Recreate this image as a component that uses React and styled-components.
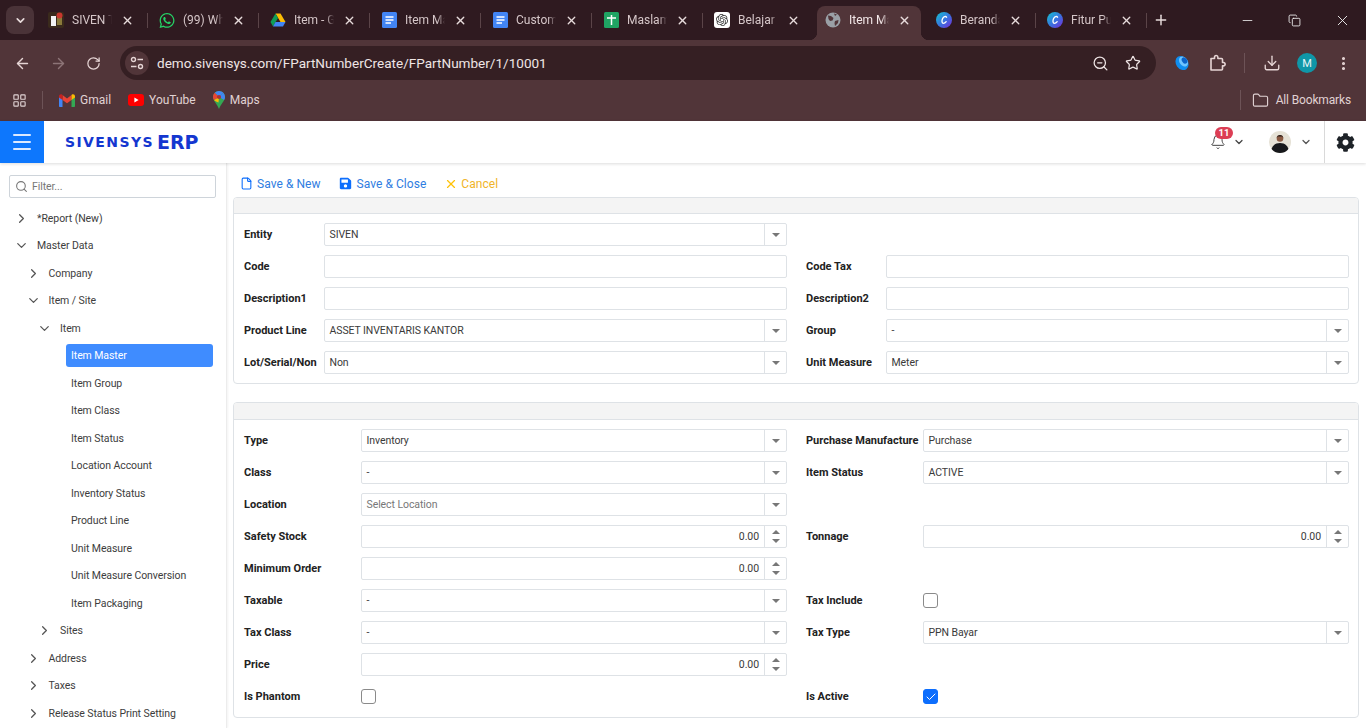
import React from "react";
import styled, { createGlobalStyle } from "styled-components";
import { ArrowLeft, ArrowRight, RotateCw, X, Plus, Minus, ZoomOut, Star, Download, EllipsisVertical, Folder, ChevronDown, ChevronRight, Bell, File, Search, Copy, LayoutGrid, Check, Menu } from "lucide-react";
import { FaWhatsapp, FaSave, FaCog } from "react-icons/fa";
import { SiOpenai } from "react-icons/si";

const Global = createGlobalStyle`
  html, body { margin: 0; padding: 0; background: #fff; }
  #root { width: 1366px; height: 728px; overflow: hidden; }
  * { box-sizing: border-box; }
`;

const Page = styled.div`
  width: 1366px; height: 728px; display: flex; flex-direction: column; overflow: hidden;
  font-family: Roboto, "Noto Sans", sans-serif; font-size: 10.5px; letter-spacing: -.08px; color: #333;
`;

/* ---------- browser chrome ---------- */
const TabStrip = styled.div`
  height: 40px; background: #2f1a20; display: flex; align-items: flex-start; flex: none; padding: 6px 0 0 6px; position: relative; letter-spacing: 0;
`;
const TabSearch = styled.div`
  width: 28px; height: 28px; margin-right: 6px; border-radius: 8px; background: #4a3338; color: #e8dcdc;
  display: flex; align-items: center; justify-content: center;
`;
const Tab = styled.div`
  width: 111px; height: 34px; flex: none; display: flex; align-items: center; padding: 0 0 6px 8px; gap: 8px; position: relative;
  color: #d5c6c8; font-family: Roboto, sans-serif; font-size: 12px;
  &::after {
    content: ""; position: absolute; right: 3px; top: 7px; height: 15px; width: 1px;
    background: ${p => (p.$sep ? "#5b4448" : "transparent")};
  }
`;
const ActiveTab = styled(Tab)`
  width: 104px; margin-right: 7px; background: #513539; border-radius: 8px 8px 0 0; color: #f3e8e8;
  &::before, &::after {
    content: ""; position: absolute; top: auto; bottom: 0; width: 8px; height: 8px; background: transparent;
  }
  &::before { left: -8px; background: radial-gradient(circle at 0 0, transparent 8px, #513539 8.5px); }
  &::after { right: -8px; background: radial-gradient(circle at 100% 0, transparent 8px, #513539 8.5px); }
`;
const FavBox = styled.span`
  width: 16px; height: 16px; flex: none; display: flex; align-items: center; justify-content: center;
`;
const TabTitle = styled.span`
  width: 40px; white-space: nowrap; overflow: hidden; flex: none;
  -webkit-mask-image: linear-gradient(90deg, #000 80%, transparent 100%);
  mask-image: linear-gradient(90deg, #000 80%, transparent 100%);
`;
const TabClose = styled.span`
  display: flex; margin-left: 1px; color: #e8dcdc;
`;
const NewTab = styled.div`
  color: #e8dcdc; display: flex; margin: 6px 0 0 3px;
`;
const WindowButtons = styled.div`
  margin-left: auto; display: flex; align-items: center; gap: 33px; padding: 6px 15px 0 0; color: #f2f2f2;
`;
const Toolbar = styled.div`
  height: 46px; background: #513539; flex: none; display: flex; align-items: center; padding: 0 12px 0 14px; color: #e6d5d5; letter-spacing: 0;
`;
const NavIcon = styled.span`
  display: flex; margin-right: 19px; color: ${p => (p.$dim ? "#8d7477" : "#e6d5d5")};
`;
const Omnibox = styled.div`
  width: 1036px; height: 34px; background: #351f23; border-radius: 17px; display: flex; align-items: center; padding: 0 15px 0 5px;
  color: #efe5e5; font-family: Roboto, sans-serif; font-size: 13.55px;
`;
const SiteInfo = styled.span`
  width: 24px; height: 24px; border-radius: 50%; background: #513539; display: flex; align-items: center; justify-content: center; margin-right: 8px;
`;
const OmniRight = styled.div`
  margin-left: auto; display: flex; gap: 16px; align-items: center;
`;
const ToolRight = styled.div`
  display: flex; align-items: center; gap: 18px; margin-left: 18px; flex: 1;
`;
const VSep = styled.span`
  width: 1px; height: 20px; background: #6d5357; margin: 0 ${p => p.$m ?? 0}px;
`;
const Profile = styled.span`
  width: 20px; height: 20px; margin-left: -2px; border-radius: 50%; background: #0f97a8; color: #e8f5f5; font-size: 11px;
  display: flex; align-items: center; justify-content: center;
`;
const Bookmarks = styled.div`
  height: 35px; background: #513539; flex: none; display: flex; align-items: center; padding: 0 15px 7px 12px; color: #e0d2d3;
  font-family: Roboto, sans-serif; font-size: 12px; letter-spacing: 0;
`;
const BookmarkSep = styled(VSep)`
  margin: 0 16px 0 15px; height: 18px;
`;
const Bookmark = styled.span`
  display: flex; align-items: center; gap: 5px; margin-right: 17px;
`;
const AllBookmarks = styled.span`
  margin-left: auto; display: flex; align-items: center; gap: 7px; letter-spacing: -.15px;
`;

/* ---------- app header ---------- */
const AppHeader = styled.header`
  height: 42px; flex: none; background: #fff; display: flex; align-items: center; box-shadow: 0 1px 3px rgba(0,0,0,.14); position: relative; z-index: 2; letter-spacing: 0;
`;
const Burger = styled.button`
  width: 44px; height: 42px; border: 0; padding: 0; background: #0d77fd; color: #dbe9ff; display: flex; align-items: center; justify-content: center;
`;
const Logo = styled.div`
  margin-left: 21px; color: #1437d0; font-family: "DejaVu Sans", sans-serif; font-weight: 700; display: flex; align-items: center; gap: 3px; line-height: 1;
`;
const LogoSmall = styled.span`
  font-size: 14px; letter-spacing: 1.4px;
`;
const LogoBig = styled.span`
  font-size: 19px;
`;
const HeaderRight = styled.div`
  margin-left: auto; display: flex; align-items: center; height: 100%;
`;
const BellWrap = styled.div`
  position: relative; display: flex; align-items: center; gap: 7px; margin-right: 24px; color: #444;
`;
const Badge = styled.span`
  position: absolute; left: 5px; top: -7px; min-width: 18px; height: 12px; border-radius: 7px; background: #dc3e55; color: #fff;
  font-size: 9.5px; font-weight: 700; display: flex; align-items: center; justify-content: center; line-height: 1;
`;
const UserWrap = styled.div`
  display: flex; align-items: center; gap: 9px; margin-right: 12px; color: #555;
`;
const Gear = styled.div`
  width: 42px; height: 100%; border-left: 1px solid #d9d9d9; display: flex; align-items: center; justify-content: center; color: #1e2328;
`;

/* ---------- body ---------- */
const Body = styled.div`
  flex: 1; display: flex; min-height: 0;
`;
const Sidebar = styled.aside`
  width: 227px; flex: none; border-right: 1px solid #ececec; padding: 12px 10px 0 9px; box-shadow: 1px 0 2px rgba(0,0,0,.05);
`;
const Filter = styled.div`
  height: 23px; border: 1px solid #ced4da; border-radius: 2px; display: flex; align-items: center; gap: 4px; padding: 0 5px; color: #777; margin-bottom: 6.5px;
`;
const Tree = styled.div`
  display: flex; flex-direction: column;
`;
const TreeRow = styled.div`
  height: 27.5px; display: flex; align-items: center; color: #3d3d3d; padding-left: ${p => p.$level * 11.5 + 5}px; white-space: nowrap;
`;
const Caret = styled.span`
  width: 17px; flex: none; display: flex; color: #555; margin-right: 6px;
`;
const LeafLabel = styled.span`
  height: 23px; width: 147px; margin-left: 52px; padding: 0 5px; border-radius: 3px; display: flex; align-items: center;
  background: ${p => (p.$active ? "#3f8cff" : "transparent")};
  color: ${p => (p.$active ? "#fff" : "#3d3d3d")};
`;
const Main = styled.main`
  flex: 1; padding: 8px 7px 0 6px; min-width: 0;
`;
const Actions = styled.div`
  height: 26px; display: flex; align-items: center; padding-left: 7px; padding-bottom: 1px; gap: 18px;
`;
const ActionBtn = styled.span`
  display: flex; align-items: center; gap: ${p => p.$gap}px; color: ${p => p.$color}; font-size: 12px; letter-spacing: .05px;
`;
const Card = styled.section`
  border: 1px solid #dee2e6; border-radius: 4px; margin-bottom: 18px; overflow: hidden; background: #fff;
`;
const CardHead = styled.div`
  height: ${p => p.$h}px; background: #f4f4f4; border-bottom: 1px solid #dee2e6;
`;
const FormGrid = styled.div`
  display: grid; grid-template-columns: ${p => p.$label}px 1fr 19px ${p => p.$label}px 1fr;
  grid-auto-rows: 23px; row-gap: 9px; align-items: center; padding: 9px 9px 9px 10px;
`;
const Label = styled.label`
  font-weight: 700; color: #222; font-size: 11px; letter-spacing: 0; white-space: nowrap; grid-column: ${p => p.$col};
`;
const Field = styled.div`
  grid-column: ${p => p.$col}; height: 23px; border: 1px solid #dee2e6; border-radius: 2px; display: flex; align-items: stretch; background: #fff; color: ${p => (p.$muted ? "#777" : "#3a3a3a")};
`;
const FieldText = styled.span`
  flex: 1; padding: 0 5px 0 4.5px; display: flex; align-items: center; justify-content: ${p => (p.$right ? "flex-end" : "flex-start")};
`;
const FieldSide = styled.span`
  width: 22px; border-left: 1px solid #dee2e6; display: flex; flex-direction: column; align-items: center; justify-content: center; gap: 5px;
`;
const Tri = styled.i`
  width: 0; height: 0; border-left: 4px solid transparent; border-right: 4px solid transparent;
  ${p => (p.$up ? "border-bottom: 4px solid #777;" : "border-top: 4px solid #777;")}
`;
const CheckBox = styled.span`
  grid-column: ${p => p.$col}; width: 15px; height: 15px; border-radius: 3px; display: flex; align-items: center; justify-content: center;
  border: 1px solid ${p => (p.$on ? "#0d6efd" : "#8a8a8a")}; background: ${p => (p.$on ? "#0d6efd" : "#fff")}; color: #fff;
`;

/* ---------- favicons ---------- */
const FavSiven = () => (
  <svg width="16" height="16" viewBox="0 0 16 16"><rect width="16" height="16" rx="2" fill="#3a2a1c"/><rect x="3" y="4" width="5" height="10" fill="#f3f3f3"/><rect x="9" y="5" width="5" height="8" fill="#8a7a3a"/><circle cx="11.5" cy="3.5" r="3" fill="#c8372d"/></svg>
);
const FavDrive = () => (
  <svg width="16" height="16" viewBox="0 0 16 16"><path d="M5.5 1.5h5L15.5 10h-5z" fill="#fbbc04"/><path d="M5.5 1.5L.5 10 3 14.5 8 6z" fill="#0f9d58"/><path d="M3 14.5h10L15.500 10h-10z" fill="#4285f4"/></svg>
);
const FavDocs = () => (
  <svg width="15" height="16" viewBox="0 0 15 16"><rect width="15" height="16" rx="1.500" fill="#4285f4"/><path d="M3.500 5h8M3.500 8h8M3.500 11h5.500" stroke="#fff" strokeWidth="1.500"/></svg>
);
const FavSheets = () => (
  <svg width="15" height="16" viewBox="0 0 15 16"><rect width="15" height="16" rx="1.500" fill="#1fa463"/><path d="M3 6h9M7.500 3v10" stroke="#fff" strokeWidth="1.500"/></svg>
);
const FavGpt = () => (
  <svg width="16" height="16" viewBox="0 0 16 16"><rect width="16" height="16" rx="3" fill="#fff"/><SiOpenai x="2" y="2" size={12} color="#333"/></svg>
);
const FavGlobe = () => (
  <svg width="16" height="16" viewBox="0 0 16 16"><circle cx="8" cy="8" r="7.500" fill="#9aa0a6"/><path d="M3 3.500l3 .5 2.500 2-1 2.500-2.500.5L3.500 7zM10 9l3.500-1-.5 3-3 3-.5-3z" fill="#513539"/><path d="M9 1.500l3 1-2 1.500z" fill="#513539"/></svg>
);
const FavCanva = ({ id }) => (
  <svg width="16" height="16" viewBox="0 0 16 16">
    <defs><linearGradient id={id} x1="0" y1="0" x2="1" y2="1"><stop offset="0" stopColor="#14c7d0"/><stop offset=".55" stopColor="#3a6fe0"/><stop offset="1" stopColor="#7a2ad8"/></linearGradient></defs>
    <circle cx="8" cy="8" r="8" fill={`url(#${id})`}/>
    <path d="M10.600 5.200C9.800 3.800 7.600 4.600 6.600 6.600 5.600 8.800 5.800 11.400 7.400 11.400c1.100 0 2-.7 2.800-1.700" fill="none" stroke="#fff" strokeWidth="1.300" strokeLinecap="round"/>
  </svg>
);
const TuneIcon = () => (
  <svg width="14" height="14" viewBox="0 0 14 14" fill="none" stroke="#e6d5d5" strokeWidth="1.400"><circle cx="3.500" cy="3.500" r="2"/><path d="M7.500 3.500H13M1 10.500h5.500"/><circle cx="10.500" cy="10.500" r="2"/></svg>
);
const ExtensionIcon = () => (
  <svg width="18" height="18" viewBox="0 0 18 18" fill="none" stroke="#e6d5d5" strokeWidth="1.600" strokeLinejoin="round"><path d="M3 4.500h3.500V3.200a1.700 1.700 0 0 1 3.400 0V4.500h3.600a1 1 0 0 1 1 1v3h.9a1.500 1.500 0 0 1 0 3.400h-.9V15a1 1 0 0 1-1 1H3z"/></svg>
);
const Gmail = () => (
  <svg width="16" height="13" viewBox="0 0 16 13"><path d="M0 2v10c0 .6.4 1 1 1h2.500V5z" fill="#4285f4"/><path d="M16 2v10c0 .6-.4 1-1 1h-2.500V5z" fill="#34a853"/><path d="M3.500 6V1L8 4.400 12.500 1v5L8 9.300z" fill="#ea4335"/><path d="M0 2.200C0 .6 1.800-.4 3 .6l.5.4v5L0 3.400z" fill="#c5221f"/><path d="M16 2.200c0-1.600-1.800-2.600-3-1.600l-.5.4v5L16 3.400z" fill="#fbbc04"/></svg>
);
const YouTube = () => (
  <svg width="16" height="12" viewBox="0 0 16 12"><rect width="16" height="12" rx="3" fill="#f00"/><path d="M6.400 3.400L10.600 6 6.400 8.600z" fill="#fff"/></svg>
);
const Maps = () => (
  <svg width="12" height="18" viewBox="0 0 12 18"><path d="M6 0a6 6 0 0 1 6 6c0 3.500-3.800 6.500-6 12C3.800 12.500 0 9.500 0 6a6 6 0 0 1 6-6z" fill="#34a853"/><path d="M1 9L6 6l-.5 5.500C4 11 2 10 1 9z" fill="#fbbc04"/><path d="M1.700 1.800A6 6 0 0 1 6 0c1.700 0 3.200.7 4.300 1.800L6 6z" fill="#4285f4"/><path d="M10.300 1.800A6 6 0 0 1 12 6c0 1-.3 2-.9 3L6 6z" fill="#4285f4"/><path d="M1.700 1.800L6 6 1 9C.3 8 0 7 0 6c0-1.600.6-3.100 1.700-4.200z" fill="#ea4335"/><circle cx="6" cy="6" r="2.100" fill="#a33"/></svg>
);
const ExtBlue = () => (
  <svg width="16" height="18" viewBox="0 0 16 18"><ellipse cx="8" cy="9" rx="6" ry="7.500" transform="rotate(-35 8 9)" fill="#0f8ef0"/><ellipse cx="9.500" cy="7.500" rx="4" ry="5.500" transform="rotate(-35 9.500 7.500)" fill="#6fc4ff"/><ellipse cx="10.500" cy="6.500" rx="2.400" ry="3.500" transform="rotate(-35 10.500 6.500)" fill="#0a63c9"/></svg>
);
const Avatar = () => (
  <svg width="22" height="22" viewBox="0 0 22 22"><defs><clipPath id="av"><circle cx="11" cy="11" r="11"/></clipPath></defs><g clipPath="url(#av)"><rect width="22" height="22" fill="#e6e2d6"/><path d="M2 22c0-7 4-10 9-10s9 3 9 10z" fill="#17181b"/><circle cx="11" cy="7.500" r="3.300" fill="#8a5a42"/><path d="M7.700 7c-.2-4 6.800-4 6.600 0l-1-1.500H8.700z" fill="#2a1d18"/></g></svg>
);

const tabs = [
  { fav: <FavSiven />, t: "SIVEN Tech" },
  { fav: <FaWhatsapp size={17} color="#25d366" />, t: "(99) WhatsApp" },
  { fav: <FavDrive />, t: "Item - Google" },
  { fav: <FavDocs />, t: "Item Master" },
  { fav: <FavDocs />, t: "Customer" },
  { fav: <FavSheets />, t: "Maslam Data" },
  { fav: <FavGpt />, t: "Belajar Sistem" },
  { fav: <FavGlobe />, t: "Item Master", active: true },
  { fav: <FavCanva id="c1" />, t: "Beranda" },
  { fav: <FavCanva id="c2" />, t: "Fitur Pusat" },
];

const tree = [
  { l: 0, c: "r", t: "*Report (New)" },
  { l: 0, c: "d", t: "Master Data" },
  { l: 1, c: "r", t: "Company" },
  { l: 1, c: "d", t: "Item / Site" },
  { l: 2, c: "d", t: "Item" },
  { leaf: true, t: "Item Master", active: true },
  { leaf: true, t: "Item Group" },
  { leaf: true, t: "Item Class" },
  { leaf: true, t: "Item Status" },
  { leaf: true, t: "Location Account" },
  { leaf: true, t: "Inventory Status" },
  { leaf: true, t: "Product Line" },
  { leaf: true, t: "Unit Measure" },
  { leaf: true, t: "Unit Measure Conversion" },
  { leaf: true, t: "Item Packaging" },
  { l: 2, c: "r", t: "Sites" },
  { l: 1, c: "r", t: "Address" },
  { l: 1, c: "r", t: "Taxes" },
  { l: 1, c: "r", t: "Release Status Print Setting" },
];

const form1 = [
  [["Entity", "s", "SIVEN"], null],
  [["Code", "t", ""], ["Code Tax", "t", ""]],
  [["Description1", "t", ""], ["Description2", "t", ""]],
  [["Product Line", "s", "ASSET INVENTARIS KANTOR"], ["Group", "s", "-"]],
  [["Lot/Serial/Non", "s", "Non"], ["Unit Measure", "s", "Meter"]],
];
const form2 = [
  [["Type", "s", "Inventory"], ["Purchase Manufacture", "s", "Purchase"]],
  [["Class", "s", "-"], ["Item Status", "s", "ACTIVE"]],
  [["Location", "p", "Select Location"], null],
  [["Safety Stock", "n", "0.00"], ["Tonnage", "n", "0.00"]],
  [["Minimum Order", "n", "0.00"], null],
  [["Taxable", "s", "-"], ["Tax Include", "c", false]],
  [["Tax Class", "s", "-"], ["Tax Type", "s", "PPN Bayar"]],
  [["Price", "n", "0.00"], null],
  [["Is Phantom", "c", false], ["Is Active", "c", true]],
];

const Cell = ({ def, col }) => {
  if (!def) return null;
  const [label, kind, value] = def;
  const labelCol = col === 0 ? 1 : 4;
  const fieldCol = col === 0 ? 2 : 5;
  return (
    <>
      <Label $col={labelCol}>{label}</Label>
      {kind === "c" ? (
        <CheckBox $col={fieldCol} $on={value}>{value && <Check size={12} strokeWidth={2} />}</CheckBox>
      ) : (
        <Field $col={fieldCol} $muted={kind === "p"}>
          <FieldText $right={kind === "n"}>{value}</FieldText>
          {(kind === "s" || kind === "p") && <FieldSide><Tri /></FieldSide>}
          {kind === "n" && <FieldSide><Tri $up /><Tri /></FieldSide>}
        </Field>
      )}
    </>
  );
};

const Form = ({ rows, label }) => (
  <FormGrid $label={label}>
    {rows.map((r, i) => (
      <React.Fragment key={i}>
        <Cell def={r[0]} col={0} />
        <Cell def={r[1]} col={1} />
      </React.Fragment>
    ))}
  </FormGrid>
);

export default function App() {
  return (
    <Page>
      <Global />
      <TabStrip>
        <TabSearch><ChevronDown size={13} strokeWidth={3} /></TabSearch>
        {tabs.map((tab, i) => {
          const T = tab.active ? ActiveTab : Tab;
          return (
            <T key={i} $sep={!tab.active && i !== 6}>
              <FavBox>{tab.fav}</FavBox>
              <TabTitle>{tab.t}</TabTitle>
              <TabClose><X size={13} strokeWidth={2.5} /></TabClose>
            </T>
          );
        })}
        <NewTab><Plus size={16} strokeWidth={2.2} /></NewTab>
        <WindowButtons>
          <Minus size={15} strokeWidth={1.3} />
          <Copy size={13} strokeWidth={1.6} />
          <X size={17} strokeWidth={1.3} />
        </WindowButtons>
      </TabStrip>
      <Toolbar>
        <NavIcon><ArrowLeft size={17} strokeWidth={2} /></NavIcon>
        <NavIcon $dim><ArrowRight size={17} strokeWidth={2} /></NavIcon>
        <NavIcon><RotateCw size={15} strokeWidth={2} /></NavIcon>
        <Omnibox>
          <SiteInfo><TuneIcon /></SiteInfo>
          demo.sivensys.com/FPartNumberCreate/FPartNumber/1/10001
          <OmniRight>
            <ZoomOut size={17} strokeWidth={1.8} />
            <Star size={16} strokeWidth={1.8} />
          </OmniRight>
        </Omnibox>
        <ToolRight>
          <ExtBlue />
          <ExtensionIcon />
          <VSep />
          <Download size={18} strokeWidth={1.8} />
          <Profile>M</Profile>
          <EllipsisVertical size={17} strokeWidth={2.4} />
        </ToolRight>
      </Toolbar>
      <Bookmarks>
        <LayoutGrid size={15} strokeWidth={1.8} />
        <BookmarkSep />
        <Bookmark><Gmail />Gmail</Bookmark>
        <Bookmark><YouTube />YouTube</Bookmark>
        <Bookmark><Maps />Maps</Bookmark>
        <AllBookmarks>
          <VSep $m={4} />
          <Folder size={17} strokeWidth={1.6} />
          All Bookmarks
        </AllBookmarks>
      </Bookmarks>
      <AppHeader>
        <Burger aria-label="menu"><Menu size={24} strokeWidth={2} /></Burger>
        <Logo><LogoSmall>SIVENSYS</LogoSmall><LogoBig>ERP</LogoBig></Logo>
        <HeaderRight>
          <BellWrap>
            <Bell size={16} strokeWidth={1.5} />
            <Badge>11</Badge>
            <ChevronDown size={12} strokeWidth={2.5} />
          </BellWrap>
          <UserWrap>
            <Avatar />
            <ChevronDown size={12} strokeWidth={2.5} />
          </UserWrap>
          <Gear><FaCog size={19} /></Gear>
        </HeaderRight>
      </AppHeader>
      <Body>
        <Sidebar>
          <Filter><Search size={13} strokeWidth={2} />Filter...</Filter>
          <Tree>
            {tree.map((n, i) =>
              n.leaf ? (
                <TreeRow key={i} $level={0}>
                  <LeafLabel $active={n.active}>{n.t}</LeafLabel>
                </TreeRow>
              ) : (
                <TreeRow key={i} $level={n.l}>
                  <Caret>{n.c === "r" ? <ChevronRight size={15} /> : <ChevronDown size={15} />}</Caret>
                  {n.t}
                </TreeRow>
              )
            )}
          </Tree>
        </Sidebar>
        <Main>
          <Actions>
            <ActionBtn $gap={4} $color="#2f7de1"><File size={13} color="#0d6efd" />Save &amp; New</ActionBtn>
            <ActionBtn $gap={5} $color="#2f7de1"><FaSave size={13} color="#0d6efd" />Save &amp; Close</ActionBtn>
            <ActionBtn $gap={3} $color="#f0b429"><X size={14} color="#ffc107" />Cancel</ActionBtn>
          </Actions>
          <Card>
            <CardHead $h={16} />
            <Form rows={form1} label={80} />
          </Card>
          <Card>
            <CardHead $h={17} />
            <Form rows={form2} label={117} />
          </Card>
        </Main>
      </Body>
    </Page>
  );
}
